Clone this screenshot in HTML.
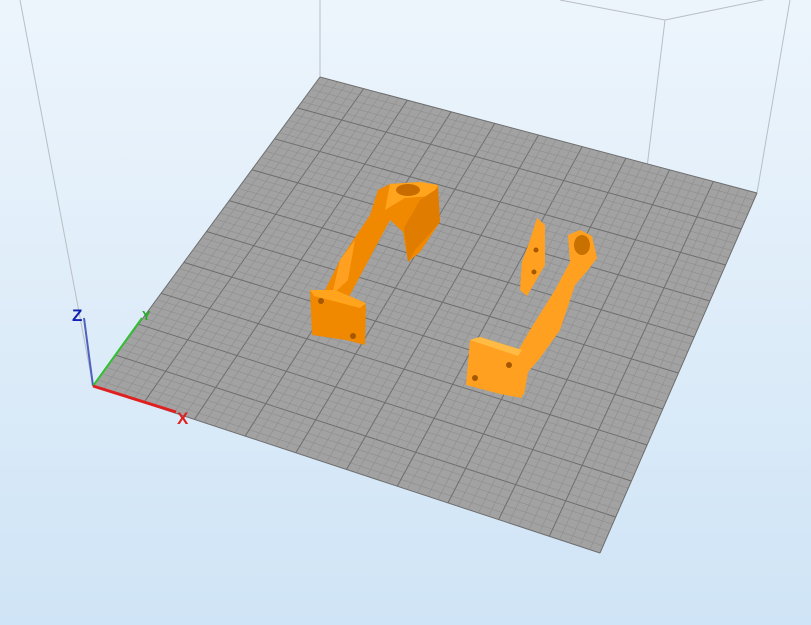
<!DOCTYPE html>
<html><head><style>
html,body{margin:0;padding:0;width:811px;height:625px;overflow:hidden}
body{background:linear-gradient(#edf5fc,#cfe4f6);}
svg{position:absolute;left:0;top:0}
</style></head><body>
<svg id="s" width="811" height="625" viewBox="0 0 811 625">
<g stroke="#b9bec4" stroke-width="1" fill="none">
<line x1="20" y1="0" x2="93" y2="386"/>
<line x1="320" y1="0" x2="320" y2="77"/>
<line x1="560" y1="0" x2="665" y2="20"/>
<line x1="665" y1="20" x2="600" y2="552"/>
<line x1="665" y1="20" x2="811" y2="-10"/>
<line x1="790" y1="0" x2="757" y2="193"/>
</g>
<polygon points="320,77 757,193 600,553 93,386" fill="#a2a2a2"/>
<g id="g"></g>
<!-- left part -->
<g>
<polygon points="378,190 390,184 420,182 438,185 440,222 420,252 408,262 403,232 390,220 350,295 335,310 320,300 340,260 370,215" fill="#f08800"/>
<polygon points="390,184 420,182 438,185 432,196 405,198 385,210" fill="#ffa41c"/>
<ellipse cx="408" cy="190" rx="12" ry="6" fill="#c86c00"/>
<polygon points="420,200 438,188 440,222 415,250 408,262 404,228" fill="#e07c00"/>
<polygon points="340,260 355,240 348,280 332,295" fill="#ffa020"/>
<polygon points="310,290 335,292 366,305 365,345 346,340 312,335" fill="#f08800"/>
<polygon points="310,290 335,290 366,303 360,308 314,296" fill="#ffa41c"/>
<circle cx="321" cy="301" r="3" fill="#a55800"/>
<circle cx="353" cy="336" r="3" fill="#a55800"/>
</g>
<!-- right part -->
<g>
<polygon points="537,218 545,225 545,265 527,296 520,290 522,262 530,240" fill="#ffa020"/>
<circle cx="536" cy="250" r="2.5" fill="#a55800"/>
<circle cx="534" cy="272" r="2.5" fill="#a55800"/>
<polygon points="568,235 580,230 592,236 597,258 588,270 575,285 560,330 540,358 528,372 524,395 507,390 510,365 530,330 555,290 570,262" fill="#ffa020"/>
<ellipse cx="582" cy="245" rx="8" ry="10" fill="#c87000"/>
<polygon points="470,340 480,337 522,350 522,398 500,394 466,385" fill="#ffa020"/>
<polygon points="470,340 480,337 522,350 518,356" fill="#ffbb44"/>
<circle cx="509" cy="365" r="3" fill="#a55800"/>
<circle cx="475" cy="378" r="3" fill="#a55800"/>
</g>
<!-- axes -->
<line x1="93" y1="386" x2="84" y2="318" stroke="#5060c0" stroke-width="2"/>
<text x="72" y="321" font-family="Liberation Sans,sans-serif" font-size="17" font-weight="bold" fill="#1020b0">Z</text>
<line x1="93" y1="386" x2="142" y2="318" stroke="#30c030" stroke-width="2"/>
<text x="142" y="320" font-family="Liberation Sans,sans-serif" font-size="13" font-weight="bold" fill="#20b020">Y</text>
<line x1="93" y1="386" x2="176" y2="412" stroke="#e02020" stroke-width="3"/>
<text x="177" y="424" font-family="Liberation Sans,sans-serif" font-size="17" font-weight="bold" fill="#e02020">X</text>
</svg>
<script>
var A=[320,77],B=[757,193],C=[600,553],D=[93,386];
function L(p,q,t){return[p[0]+(q[0]-p[0])*t,p[1]+(q[1]-p[1])*t]}
var g=document.getElementById('g'),h='';
var N=50;
for(var i=0;i<=N;i++){var t=i/N,maj=i%5==0;
var c=maj?'#6e6e6e':'#8e8e8e',w=maj?1:0.6;
var p=L(D,A,t),q=L(C,B,t);h+='<line x1="'+p[0]+'" y1="'+p[1]+'" x2="'+q[0]+'" y2="'+q[1]+'" stroke="'+c+'" stroke-width="'+w+'"/>';
p=L(D,C,t);q=L(A,B,t);h+='<line x1="'+p[0]+'" y1="'+p[1]+'" x2="'+q[0]+'" y2="'+q[1]+'" stroke="'+c+'" stroke-width="'+w+'"/>';}
g.innerHTML=h;
</script>
</body></html>
